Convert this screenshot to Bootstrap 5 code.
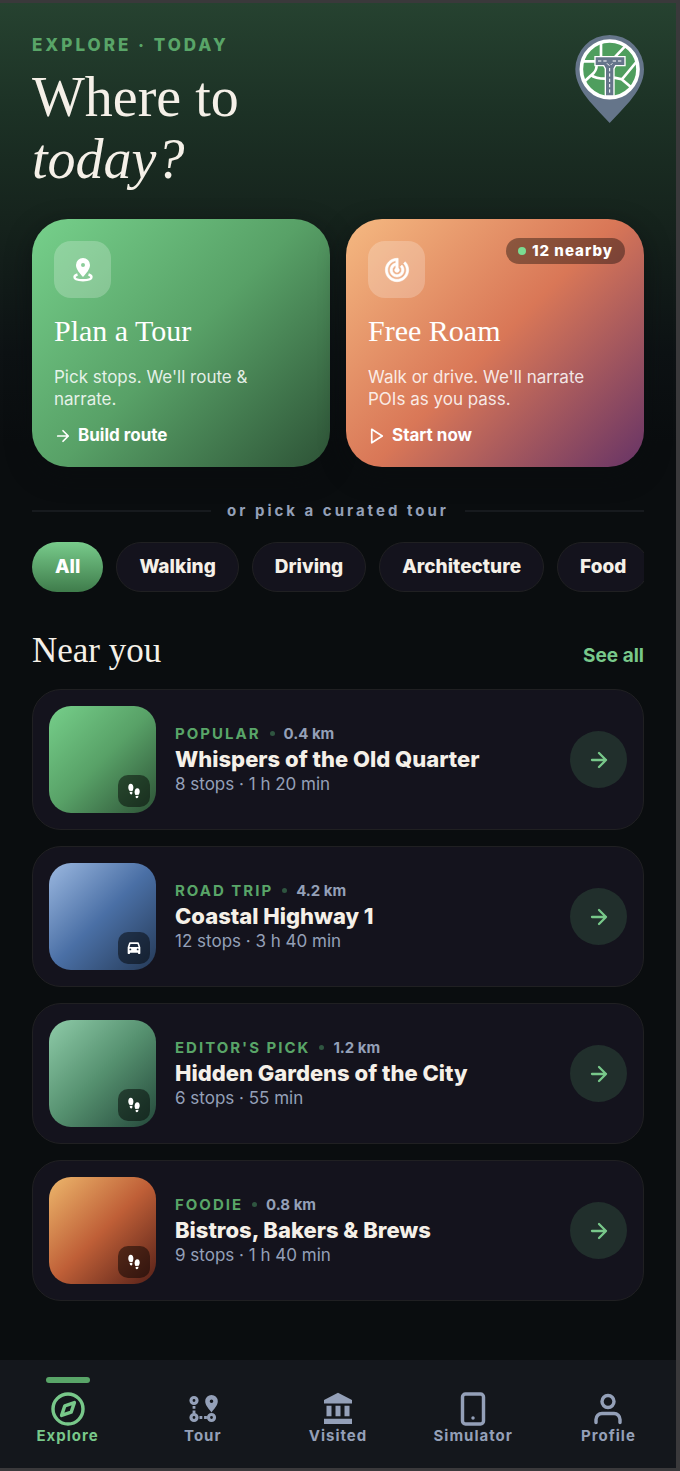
<!DOCTYPE html>
<html lang="en">
<head>
<meta charset="utf-8">
<meta name="viewport" content="width=device-width, initial-scale=1">
<title>Explore</title>
<link href="https://cdn.jsdelivr.net/npm/bootstrap@5.3.0/dist/css/bootstrap.min.css" rel="stylesheet">
<style>
:root { --green: #59a568; --mint: #78c88a; --cream: #f5f0e8; --muted: #94a0b8; --panel: #14131d; }
body { font-family: Inter, "Liberation Sans", sans-serif; background: #0a0d0f; color: var(--cream); }
.app-shell { border: solid #3a393b; border-width: 3px 4px 3px 0; background: linear-gradient(#264230 0, #1c3125 110px, #16241d 210px, #0d1214 350px, #0a0d0f 440px); }
.app-main { padding: 32px; }
.serif { font-family: "Liberation Serif", serif; font-weight: 400; margin: 0; }
.eyebrow { font-size: 17px; line-height: 20px; font-weight: 800; letter-spacing: 3px; color: var(--green); }
.hero-title { font-size: 56px; line-height: 62px; margin-top: 11px; }
.app-header { margin-bottom: 29px; }
.logo { width: 70px; height: 90px; }
.modes { display: grid; grid-template-columns: 1fr 1fr; gap: 16px; }
.mode { border: 0; border-radius: 36px; padding: 22px; text-align: left; color: #fff; text-decoration: none; box-shadow: 0 8px 24px #0a0d0f99; }
.mode-plan { background: linear-gradient(135deg, #76d08b 0%, #58a167 50%, #2d5236 100%); }
.mode-roam { background: linear-gradient(135deg, #f5b981 0%, #d97757 50%, #663366 100%); }
.mode-icon { width: 57px; height: 57px; border-radius: 17px; background: #ffffff38; }
.mode-name { font-size: 30px; line-height: 36px; margin-top: 15px; }
.mode-text { font-size: 17px; line-height: 22px; color: #ffffffdb; margin: 17px 0 16px; padding-right: 12px; }
.mode-cta { font-size: 17px; line-height: 19px; font-weight: 700; gap: 6px; }
.nearby { top: 19px; right: 19px; height: 26px; padding: 0 12px; border-radius: 13px; gap: 6px; background: #00000061; font-size: 15px; font-weight: 800; letter-spacing: 1px; }
.nearby i { width: 8px; height: 8px; border-radius: 50%; background: #7bdc92; }
.or-line { gap: 16px; margin: 34px 0 21px; font-size: 15px; line-height: 20px; font-weight: 700; letter-spacing: 3px; color: var(--muted); }
.or-line::before, .or-line::after { content: ""; flex: 1; height: 2px; background: #171a1e; }
.chips { gap: 13px; overflow-x: auto; scrollbar-width: none; }
.chips::-webkit-scrollbar { display: none; }
.chip { flex: none; height: 50px; padding: 0 22px; border: 1px solid #202022; border-radius: 25px; background: var(--panel); color: var(--cream); font-size: 19px; font-weight: 800; }
.chip.on { background: linear-gradient(#78cb8b, #3f7c4b); border-color: transparent; background-origin: border-box; color: #fff; }
.near-head { margin: 38px 0 18px; }
.near-title { font-size: 35px; line-height: 41px; }
.see-all { font-size: 19px; line-height: 30px; font-weight: 700; color: var(--mint); text-decoration: none; }
.tours { gap: 16px; }
.tour { padding: 16px; gap: 19px; border: 1px solid #202022; border-radius: 29px; background: var(--panel); }
.thumb { flex: none; width: 107px; height: 107px; border-radius: 22px; }
.thumb span { right: 6px; bottom: 6px; width: 32px; height: 32px; border-radius: 10px; background: #0000007a; color: #fff; }
.t-old { background: linear-gradient(135deg, #76cf8a, #58a167 50%, #2d5236); }
.t-coast { background: linear-gradient(135deg, #9bb8e0, #4a6fa5 50%, #253a57); }
.t-garden { background: linear-gradient(135deg, #8ecba8, #55906f 50%, #24483a); }
.t-food { background: linear-gradient(135deg, #edb76c, #bf5f37 50%, #552018); }
.tour-copy { padding-bottom: 2px; }
.meta { font-size: 15px; line-height: 20px; font-weight: 700; gap: 9px; color: var(--muted); }
.meta b { font-weight: 700; letter-spacing: 2px; color: var(--green); }
.meta i { width: 5px; height: 5px; border-radius: 50%; background: #2f5540; }
.tour-name { font-size: 22px; line-height: 30px; font-weight: 800; margin: 0; }
.tour-info { font-size: 17px; line-height: 20px; color: var(--muted); margin: 0; }
.go { flex: none; width: 57px; height: 57px; border: 0; border-radius: 50%; background: #212f2c; color: var(--mint); }
.tabs { background: #14171c; padding: 17px 0 23px; }
.tab { flex: 1 1 0; color: var(--muted); text-decoration: none; font-size: 15px; line-height: 18px; font-weight: 700; letter-spacing: 1px; }
.tab::before { content: ""; width: 44px; height: 6px; border-radius: 3px; margin-bottom: 8px; }
.tab.on { color: var(--mint); }
.tab.on::before { background: var(--green); }
.line-icon { fill: none; stroke: currentColor; stroke-width: 2.3; stroke-linecap: round; stroke-linejoin: round; }
svg { display: block; flex: none; }
</style>
<script src="https://cdn.jsdelivr.net/npm/bootstrap@5.3.0/dist/js/bootstrap.bundle.min.js"></script>
</head>
<body>
<svg width="0" height="0" class="position-absolute" aria-hidden="true">
  <symbol id="arrow" viewBox="0 0 24 24"><path d="M5 12h14M12 5l7 7-7 7"/></symbol>
  <symbol id="steps" viewBox="0 0 20 20"><path d="M6.600 2.800c1.900 0 3 2 2.800 4.300-.1 1.200-.6 2.200-1 3.100L5.300 9.800C4.700 8.500 4.200 7.300 4.300 6c.1-1.800.9-3.200 2.300-3.200zM5.700 10.800l2.600.3c.3 1.300-.1 2.400-1 2.400-1.100 0-1.700-1.200-1.600-2.700z"/><path d="M13.400 7.200c-1.900 0-3 2-2.800 4.300.1 1 .4 1.800.8 2.600l3.300-.4c.6-1.200 1.100-2.200 1-3.500-.1-1.700-.9-3-2.300-3zM14.400 14.800l-2.700.3c-.3 1.200.1 2.200 1.100 2.200 1.100 0 1.700-1.100 1.600-2.500z"/></symbol>
  <symbol id="car" viewBox="0 0 24 24"><path fill-rule="evenodd" d="M19.500 5c-.2-.9-.8-1.500-1.800-1.500H6.300c-1 0-1.600.6-1.800 1.500L2.500 11v9c0 .6.400 1 1 1h1.500c.6 0 1-.4 1-1v-1h12v1c0 .6.400 1 1 1h1.500c.6 0 1-.4 1-1v-9l-2-6zM6.500 15.500a1.400 1.400 0 1 1 0-2.800 1.400 1.400 0 0 1 0 2.800zm11 0a1.400 1.400 0 1 1 0-2.800 1.400 1.400 0 0 1 0 2.800zM5.200 10.500L6.700 6h10.600l1.500 4.500H5.200z"/></symbol>
</svg>
<div class="app-shell d-flex flex-column min-vh-100">
  <main class="app-main">
    <header class="app-header d-flex justify-content-between align-items-start">
      <div>
        <div class="eyebrow">EXPLORE · TODAY</div>
        <h1 class="serif hero-title">Where to<br><em>today?</em></h1>
      </div>
      <svg class="logo" viewBox="104 105 210 270" role="img" aria-label="Tour logo">
        <path fill="#65758a" d="M211 105a103 103 0 0 0-103 103c0 36 19 67 42 95 20 23 41 45 61 66 20-21 41-43 61-66 23-28 42-59 42-95A103 103 0 0 0 211 105z"/>
        <circle cx="211" cy="208" r="85" fill="#4f9e5e" stroke="#fff" stroke-width="11"/>
        <path fill="none" stroke="#fff" stroke-width="8" d="M185 129v44M257 139l-32 34M130 184h38M172 198c-2 18-9 21-19 30l-17 16M154 224c11 10 23 12 45 12M291 186l-43 52-24-5M247 238l32 27"/>
        <path fill="#65758a" stroke="#fff" stroke-width="4" d="M167 170h90v27h-28l-5 9v82h-26v-82l-5-9h-26z"/>
        <path fill="none" stroke="#fff" stroke-width="3" stroke-dasharray="10 6" d="M176 183h26M220 183h28M211 204v78M203 190l8 8 8-8"/>
      </svg>
    </header>

    <section class="modes">
      <a href="#plan" class="mode mode-plan">
        <div class="mode-icon d-flex align-items-center justify-content-center">
          <svg width="24" height="26" viewBox="0 0 24 26"><path fill="#fff" fill-rule="evenodd" d="M12 1a7 7 0 0 0-7 7c0 4.500 4 8.500 7 12 3-3.500 7-7.500 7-12a7 7 0 0 0-7-7zm0 5a2 2 0 1 1 0 4 2 2 0 0 1 0-4z"/><path d="M6.500 17.500c-2 .6-3 1.400-3 2.500 0 2 3.800 3.200 8.500 3.200s8.500-1.200 8.500-3.200c0-1.100-1-1.900-3-2.500" fill="none" stroke="#fff" stroke-width="2.400"/></svg>
        </div>
        <h2 class="serif mode-name">Plan a Tour</h2>
        <p class="mode-text">Pick stops. We'll route &amp; narrate.</p>
        <div class="mode-cta d-flex align-items-center"><svg class="line-icon" width="18" height="18"><use href="#arrow"/></svg>Build route</div>
      </a>
      <a href="#roam" class="mode mode-roam position-relative">
        <div class="nearby position-absolute d-flex align-items-center"><i></i>12 nearby</div>
        <div class="mode-icon d-flex align-items-center justify-content-center">
          <svg width="28" height="28" viewBox="0 0 24 24" fill="#fff" stroke="#fff" stroke-width=".5"><path d="M19.070 4.930l-1.410 1.410C19.100 7.790 20 9.790 20 12c0 4.420-3.580 8-8 8s-8-3.580-8-8c0-4.080 3.050-7.440 7-7.930v2.020C8.160 6.570 6 9.030 6 12c0 3.310 2.690 6 6 6s6-2.690 6-6c0-1.660-.67-3.160-1.760-4.240l-1.410 1.410C15.550 9.900 16 10.900 16 12c0 2.210-1.790 4-4 4s-4-1.790-4-4c0-1.860 1.280-3.410 3-3.860v2.140c-.6.350-1 .98-1 1.720 0 1.100.9 2 2 2s2-.9 2-2c0-.74-.4-1.380-1-1.720V2h-1C6.480 2 2 6.480 2 12s4.480 10 10 10 10-4.480 10-10c0-2.760-1.120-5.260-2.930-7.070z"/></svg>
        </div>
        <h2 class="serif mode-name">Free Roam</h2>
        <p class="mode-text">Walk or drive. We'll narrate POIs as you pass.</p>
        <div class="mode-cta d-flex align-items-center"><svg class="line-icon" width="18" height="18" viewBox="0 0 24 24"><path d="M5 3l14 9-14 9z"/></svg>Start now</div>
      </a>
    </section>

    <div class="or-line d-flex align-items-center">or pick a curated tour</div>

    <div class="chips d-flex">
      <button type="button" class="chip on">All</button>
      <button type="button" class="chip">Walking</button>
      <button type="button" class="chip">Driving</button>
      <button type="button" class="chip">Architecture</button>
      <button type="button" class="chip">Food</button>
    </div>

    <div class="near-head d-flex justify-content-between align-items-end">
      <h2 class="serif near-title">Near you</h2>
      <a href="#all" class="see-all">See all</a>
    </div>

    <section class="tours d-flex flex-column">
      <article class="tour d-flex align-items-center">
        <div class="thumb t-old position-relative"><span class="position-absolute d-flex align-items-center justify-content-center"><svg width="20" height="20" fill="currentColor"><use href="#steps"/></svg></span></div>
        <div class="tour-copy flex-grow-1">
          <div class="meta d-flex align-items-center"><b>POPULAR</b><i></i>0.4 km</div>
          <h3 class="tour-name">Whispers of the Old Quarter</h3>
          <p class="tour-info">8 stops · 1 h 20 min</p>
        </div>
        <button type="button" class="go d-flex align-items-center justify-content-center" aria-label="Open Whispers of the Old Quarter"><svg class="line-icon" width="24" height="24"><use href="#arrow"/></svg></button>
      </article>
      <article class="tour d-flex align-items-center">
        <div class="thumb t-coast position-relative"><span class="position-absolute d-flex align-items-center justify-content-center"><svg width="16" height="16" fill="currentColor"><use href="#car"/></svg></span></div>
        <div class="tour-copy flex-grow-1">
          <div class="meta d-flex align-items-center"><b>ROAD TRIP</b><i></i>4.2 km</div>
          <h3 class="tour-name">Coastal Highway 1</h3>
          <p class="tour-info">12 stops · 3 h 40 min</p>
        </div>
        <button type="button" class="go d-flex align-items-center justify-content-center" aria-label="Open Coastal Highway 1"><svg class="line-icon" width="24" height="24"><use href="#arrow"/></svg></button>
      </article>
      <article class="tour d-flex align-items-center">
        <div class="thumb t-garden position-relative"><span class="position-absolute d-flex align-items-center justify-content-center"><svg width="20" height="20" fill="currentColor"><use href="#steps"/></svg></span></div>
        <div class="tour-copy flex-grow-1">
          <div class="meta d-flex align-items-center"><b>EDITOR'S PICK</b><i></i>1.2 km</div>
          <h3 class="tour-name">Hidden Gardens of the City</h3>
          <p class="tour-info">6 stops · 55 min</p>
        </div>
        <button type="button" class="go d-flex align-items-center justify-content-center" aria-label="Open Hidden Gardens of the City"><svg class="line-icon" width="24" height="24"><use href="#arrow"/></svg></button>
      </article>
      <article class="tour d-flex align-items-center">
        <div class="thumb t-food position-relative"><span class="position-absolute d-flex align-items-center justify-content-center"><svg width="20" height="20" fill="currentColor"><use href="#steps"/></svg></span></div>
        <div class="tour-copy flex-grow-1">
          <div class="meta d-flex align-items-center"><b>FOODIE</b><i></i>0.8 km</div>
          <h3 class="tour-name">Bistros, Bakers &amp; Brews</h3>
          <p class="tour-info">9 stops · 1 h 40 min</p>
        </div>
        <button type="button" class="go d-flex align-items-center justify-content-center" aria-label="Open Bistros, Bakers &amp; Brews"><svg class="line-icon" width="24" height="24"><use href="#arrow"/></svg></button>
      </article>
    </section>
  </main>

  <nav class="tabs d-flex mt-auto">
    <a href="#explore" class="tab on d-flex flex-column align-items-center" aria-current="page">
      <svg class="line-icon" width="36" height="36" viewBox="0 0 24 24"><circle cx="12" cy="12" r="10"/><path d="M16.240 7.760l-2.120 6.360-6.360 2.120 2.120-6.360z"/></svg>Explore</a>
    <a href="#tour" class="tab d-flex flex-column align-items-center">
      <svg width="36" height="36" viewBox="0 0 36 36" fill="none" stroke="currentColor"><g stroke-width="3.200"><circle cx="9" cy="9.500" r="3"/><circle cx="9" cy="26.500" r="3"/><circle cx="26.500" cy="26.500" r="3"/></g><path stroke-width="2.800" stroke-dasharray="2.800 1.800" d="M9 15v8M14.500 26.500h8"/><path fill="currentColor" stroke="none" fill-rule="evenodd" d="M26.500 4a6.300 6.300 0 0 0-6.300 6.300c0 4.200 3.700 7.500 6.300 11.200 2.600-3.700 6.300-7 6.300-11.200A6.300 6.300 0 0 0 26.500 4zm0 4.500a1.800 1.800 0 1 1 0 3.600 1.800 1.800 0 0 1 0-3.600z"/></svg>Tour</a>
    <a href="#visited" class="tab d-flex flex-column align-items-center">
      <svg width="36" height="36" viewBox="0 0 36 36" fill="currentColor"><path d="M18 1.700L4 9v3.500h28V9zM6.500 14.700h5v10.600h-5zM15.500 14.700h5v10.600h-5zM24.500 14.700h5v10.600h-5zM4 27.700h28V33H4z"/></svg>Visited</a>
    <a href="#simulator" class="tab d-flex flex-column align-items-center">
      <svg class="line-icon" width="36" height="36" viewBox="0 0 24 24"><rect x="5" y="2" width="14" height="20" rx="2"/><path d="M12 18h.01"/></svg>Simulator</a>
    <a href="#profile" class="tab d-flex flex-column align-items-center">
      <svg class="line-icon" width="36" height="36" viewBox="0 0 24 24"><circle cx="12" cy="7" r="4"/><path d="M20 21v-2a4 4 0 0 0-4-4H8a4 4 0 0 0-4 4v2"/></svg>Profile</a>
  </nav>
</div>
</body>
</html>
